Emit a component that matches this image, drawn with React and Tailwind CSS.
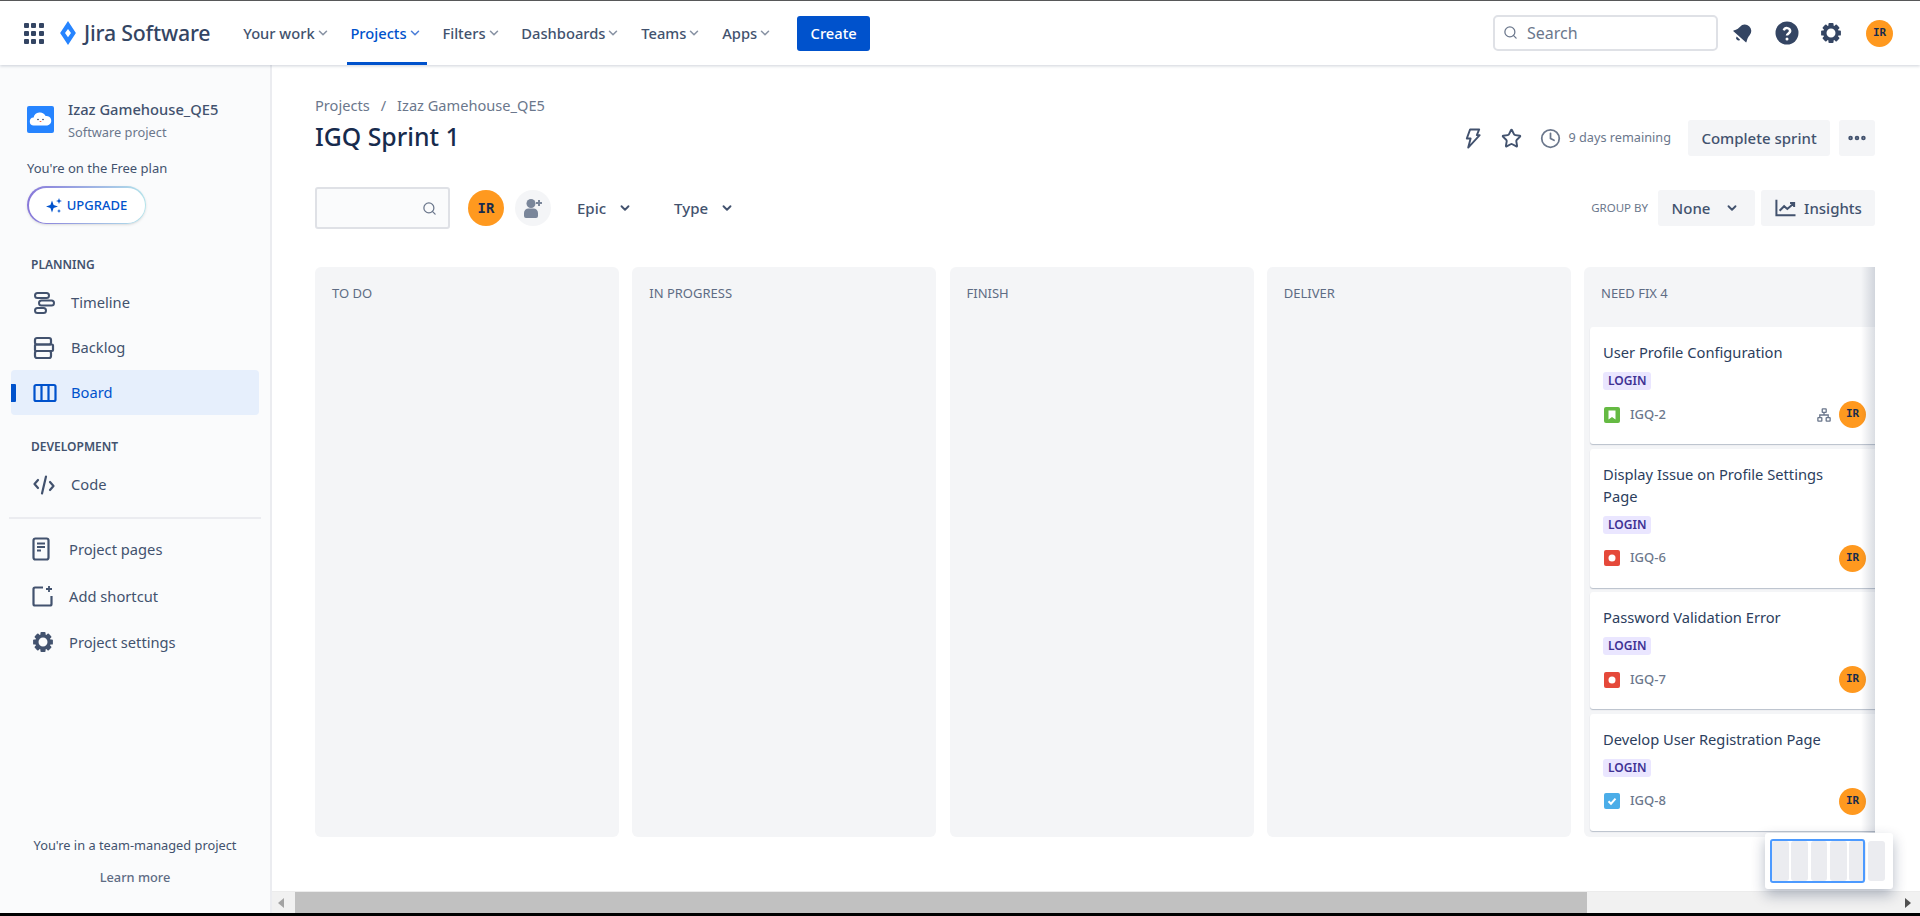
import React from 'react'
import { ChevronDown, Search, Star, Clock, Ellipsis } from 'lucide-react'

const Avatar = ({ size = 'w-[27px] h-[27px] text-[11px]' }) => (
  <div className={`${size} rounded-full bg-[#ff991f] text-[#172b4d] flex items-center justify-center font-bold font-['DejaVu_Sans_Mono',monospace] shrink-0`}>
    IR
  </div>
)

const Gear = ({ className }) => (
  <svg viewBox="0 0 24 24" className={className} fill="none">
    {[0, 45, 90, 135, 180, 225, 270, 315].map(a => (
      <rect key={a} x="9.2" y="1.2" width="5.6" height="5" rx="1" fill="currentColor" transform={`rotate(${a} 12 12)`} />
    ))}
    <circle cx="12" cy="12" r="6.7" stroke="currentColor" strokeWidth="3.6" />
  </svg>
)

const JiraLogo = () => (
  <svg viewBox="0 0 24 32" className="w-[18px] h-[24px]">
    <path fillRule="evenodd" d="M12 0 L22.5 16 L12 32 L1.5 16 Z M12 10.5 L8 16 L12 21.5 L16 16 Z" fill="#2684ff" />
  </svg>
)

const GridDots = () => (
  <div className="grid grid-cols-3 gap-[3px] w-[19px]">
    {[1, 2, 3, 4, 5, 6, 7, 8, 9].map(n => <span key={n} className="w-[5px] h-[5px] bg-[#344563] rounded-[1px]" />)}
  </div>
)

const NavItem = ({ label, active }) => (
  <div className={`relative h-[63px] flex items-center px-[5px] gap-[1px] text-[14.7px] font-medium ${active ? 'text-[#0052cc]' : 'text-[#42526e]'}`}>
    {label}
    <ChevronDown className={`w-[14px] h-[14px] ${active ? 'text-[#4c7fd8]' : 'text-[#8993a4]'}`} strokeWidth={2.6} />
    {active && <span className="absolute left-[2px] right-0 bottom-0 h-[3px] bg-[#0052cc]" />}
  </div>
)

const TimelineIcon = () => (
  <svg viewBox="0 0 22 24" className="w-[22px] h-[24px]" fill="none" stroke="#42526e" strokeWidth="2">
    <rect x="2" y="2" width="14" height="5" rx="2.5" />
    <rect x="6" y="9.5" width="15" height="5" rx="2.5" />
    <rect x="2" y="17" width="11" height="5" rx="2.5" />
  </svg>
)

const BacklogIcon = () => (
  <svg viewBox="0 0 22 24" className="w-[22px] h-[24px]" fill="none" stroke="#42526e" strokeWidth="2.2">
    <rect x="2" y="2" width="16" height="6.500" rx="2" />
    <rect x="2" y="8.500" width="18" height="6.500" rx="1" />
    <rect x="2" y="15" width="16" height="7" rx="2" />
  </svg>
)

const BoardIcon = () => (
  <svg viewBox="0 0 24 20" className="w-[24px] h-[20px]" fill="none" stroke="#0052cc" strokeWidth="2.2">
    <rect x="1.5" y="2" width="21" height="16" rx="1.5" />
    <path d="M8.5 2v16M15.5 2v16" />
  </svg>
)

const CodeIcon = () => (
  <svg viewBox="0 0 22 20" className="w-[22px] h-[20px]" fill="none" stroke="#42526e" strokeWidth="2.2" strokeLinecap="round" strokeLinejoin="round">
    <path d="M5 5 1.5 9 5 13M17 7l3.5 4-3.5 4M13 1.5 9 18.5" />
  </svg>
)

const PagesIcon = () => (
  <svg viewBox="0 0 18 24" className="w-[18px] h-[24px]" fill="none" stroke="#42526e" strokeWidth="2.2">
    <rect x="1.5" y="1.5" width="15" height="21" rx="2" />
    <path d="M5 6.5h8M5 10h8M5 13.5h4" />
  </svg>
)

const ShortcutIcon = () => (
  <svg viewBox="0 0 22 22" className="w-[22px] h-[22px]" fill="none" stroke="#42526e" strokeWidth="2.2">
    <path d="M11 2.5H3a1.5 1.5 0 0 0-1.5 1.500v15A1.5 1.5 0 0 0 3 20.5h15a1.5 1.5 0 0 0 1.5-1.5v-8" />
    <path d="M17 1v6M14 4h6" strokeWidth="1.8" />
  </svg>
)

const SideRow = ({ icon, label, active, tall }) => (
  <div className={`relative flex items-center ${tall ? 'h-[46.500px] pl-[26px]' : 'h-[45px] pl-[22px]'} ${active ? 'bg-[#e6effc] rounded-[4px] text-[#0052cc]' : 'text-[#42526e]'} text-[14.7px]`}>
    {active && <span className="absolute left-0 top-[14px] w-[5px] h-[18px] bg-[#0052cc] rounded-r-[1px]" />}
    <span className={`${tall ? 'w-[37px]' : 'w-[38px]'} flex items-center shrink-0`}>{icon}</span>
    {label}
  </div>
)

const Sidebar = () => (
  <aside className="w-[272px] shrink-0 bg-[#fafbfc] border-r-2 border-[#ebecf0] flex flex-col pt-[34px]">
    <div className="flex items-start gap-[14px] pl-[27px]">
      <svg viewBox="0 0 27 27" className="w-[27px] h-[27px] mt-[7px] rounded-[2px]">
        <rect width="27" height="27" fill="#2684ff" />
        <path d="M7 19.5a4 4 0 0 1-.4-8 6.4 6.4 0 0 1 12-1.5 4.8 4.8 0 0 1 1.7 9.5Z" fill="#fff" />
        <circle cx="11" cy="13.5" r=".8" fill="#253858" />
        <circle cx="16" cy="13.5" r=".8" fill="#253858" />
        <path d="M12.5 15h2a1 1 0 0 1-2 0Z" fill="#ff5630" />
      </svg>
      <div>
        <div className="text-[14.7px] leading-[20px] font-medium text-[#42526e]">Izaz Gamehouse_QE5</div>
        <div className="text-[12.800px] leading-[20px] mt-[3px] text-[#6b778c]">Software project</div>
      </div>
    </div>

    <div className="pl-[27px] mt-[16px] text-[13px] leading-[20px] text-[#42526e]">You're on the Free plan</div>
    <div className="ml-[27px] mt-[8px] w-[119px] h-[38px] rounded-full p-[1.5px] bg-linear-to-r from-[#8777d9] to-[#b3e3ea] shadow-sm">
      <div className="w-full h-full pt-[1px] rounded-full bg-white flex items-center justify-center gap-[5px] text-[13px] font-medium text-[#0052cc]">
        <svg viewBox="0 0 16 16" className="w-[16px] h-[16px]" fill="#0052cc">
          <path d="M6 2.5 7.6 7 12 8.5 7.6 10 6 14.5 4.4 10 0 8.5 4.4 7Z" />
          <path d="M13 0l.8 2.2L16 3l-2.2.8L13 6l-.8-2.200L10 3l2.200-.8ZM13 11l.6 1.400L15 13l-1.400.6L13 15l-.6-1.400L11 13l1.400-.6Z" />
        </svg>
        UPGRADE
      </div>
    </div>

    <div className="pl-[31px] mt-[33px] text-[12px] leading-[16px] font-semibold text-[#42526e]">PLANNING</div>
    <div className="mt-[7px] px-[11px]">
      <SideRow icon={<TimelineIcon />} label="Timeline" />
      <SideRow icon={<BacklogIcon />} label="Backlog" />
      <SideRow icon={<BoardIcon />} label="Board" active />
    </div>

    <div className="pl-[31px] mt-[24px] text-[12px] leading-[16px] font-semibold text-[#42526e]">DEVELOPMENT</div>
    <div className="mt-[7px] px-[11px]">
      <SideRow icon={<CodeIcon />} label="Code" />
    </div>

    <div className="mx-[9px] mt-[10px] h-[2px] bg-[#ebecf0]" />
    <div className="mt-[7px] px-[6px]">
      <SideRow tall icon={<PagesIcon />} label="Project pages" />
      <SideRow tall icon={<ShortcutIcon />} label="Add shortcut" />
      <SideRow tall icon={<Gear className="w-[22px] h-[22px] text-[#42526e]" />} label="Project settings" />
    </div>

    <div className="mt-auto pb-[26px] text-center text-[12.800px] leading-[20px] text-[#42526e]">
      <div>You're in a team-managed project</div>
      <div className="mt-[12px] font-medium text-[#5e6c84]">Learn more</div>
    </div>
  </aside>
)

const TopNav = () => (
  <header className="h-[64px] shrink-0 bg-white flex items-center pl-[24px] pr-[27px] shadow-[0_1px_3px_rgba(9,30,66,0.2)] relative z-10">
    <GridDots />
    <div className="ml-[16px]"><JiraLogo /></div>
    <div className="ml-[7px] text-[21.300px] font-medium text-[#344563] tracking-[-0.2px]">Jira Software</div>
    <nav className="ml-[28px] flex items-center gap-[10.800px]">
      <NavItem label="Your work" />
      <NavItem label="Projects" active />
      <NavItem label="Filters" />
      <NavItem label="Dashboards" />
      <NavItem label="Teams" />
      <NavItem label="Apps" />
    </nav>
    <button className="ml-[20px] w-[73px] h-[35px] rounded-[3px] bg-[#0052cc] text-white text-[14.7px] font-medium">Create</button>
    <div className="ml-auto w-[225px] h-[36px] border-2 border-[#dfe1e6] rounded-[5px] flex items-center pl-[8px] pb-[1px] gap-[9px] text-[16px] text-[#6b778c]">
      <Search className="w-[15px] h-[15px]" strokeWidth={2} />
      Search
    </div>
    <svg viewBox="0 0 24 24" className="ml-[14px] w-[22px] h-[22px]" fill="#344563">
      <g transform="rotate(42 12 12)">
        <path d="M12 2a7 7 0 0 0-7 7c0 5-2.500 6.500-2.500 8.500h19c0-2-2.500-3.500-2.500-8.500a7 7 0 0 0-7-7Z" />
        <path d="M9.500 19.500h5a2.500 2.500 0 0 1-5 0Z" />
      </g>
    </svg>
    <svg viewBox="0 0 24 24" className="ml-[21px] w-[24px] h-[24px]">
      <circle cx="12" cy="12" r="11.500" fill="#344563" />
      <path d="M8.800 9.300a3.300 3.300 0 0 1 6.400.8c0 2.200-3.200 2.500-3.200 4.400" fill="none" stroke="#fff" strokeWidth="2.500" />
      <circle cx="12" cy="18" r="1.500" fill="#fff" />
    </svg>
    <Gear className="ml-[21px] w-[22px] h-[22px] text-[#344563]" />
    <div className="ml-[24px]"><Avatar /></div>
  </header>
)

const cards = [
  { title: 'User Profile Configuration', id: 'IGQ-2', type: 'story', child: true },
  { title: 'Display Issue on Profile Settings Page', id: 'IGQ-6', type: 'bug' },
  { title: 'Password Validation Error', id: 'IGQ-7', type: 'bug' },
  { title: 'Develop User Registration Page', id: 'IGQ-8', type: 'task' },
]

const IssueIcon = ({ type }) => {
  if (type === 'story') {
    return (
      <svg viewBox="0 0 16 16" className="w-[16px] h-[16px]">
        <rect width="16" height="16" rx="2" fill="#65ba43" />
        <path d="M4.500 3.500h7v9L8 10l-3.500 2.500Z" fill="#fff" />
      </svg>
    )
  }
  if (type === 'bug') {
    return (
      <svg viewBox="0 0 16 16" className="w-[16px] h-[16px]">
        <rect width="16" height="16" rx="2" fill="#e5493a" />
        <circle cx="8" cy="8" r="3.500" fill="#fff" />
      </svg>
    )
  }
  return (
    <svg viewBox="0 0 16 16" className="w-[16px] h-[16px]">
      <rect width="16" height="16" rx="2" fill="#4bade8" />
      <path d="M4.500 8.200 7 10.700l4.500-5" fill="none" stroke="#fff" strokeWidth="2" />
    </svg>
  )
}

const Card = ({ title, id, type, child }) => (
  <div className="bg-white rounded-[3px] shadow-[0_1px_1px_rgba(9,30,66,0.25)] pt-[14px] pb-[16px] pl-[13px] pr-[16px]">
    <div className="text-[14.7px] leading-[22px] text-[#2c3e5d] pr-[20px]">{title}</div>
    <div className="mt-[9px] inline-flex align-top h-[18px] items-center px-[5px] rounded-[3px] bg-[#eae6ff] text-[#403294] text-[12px] font-semibold">LOGIN</div>
    <div className="mt-[11px] flex items-center h-[27px]">
      <div className="ml-[1px]"><IssueIcon type={type} /></div>
      <span className="ml-[10px] text-[13px] font-medium text-[#6b778c]">{id}</span>
      <div className="ml-auto flex items-center gap-[8px]">
        {child && (
          <svg viewBox="0 0 16 16" className="w-[14px] h-[14px]" fill="none" stroke="#6b778c" strokeWidth="1.500">
            <rect x="6" y="1" width="4.500" height="4" rx=".5" />
            <rect x="1" y="11" width="4.500" height="4" rx=".5" />
            <rect x="10.500" y="11" width="4.500" height="4" rx=".5" />
            <path d="M8 5v3M3.200 11V8h9.600v3" />
          </svg>
        )}
        <Avatar />
      </div>
    </div>
  </div>
)

const Column = ({ title, children }) => (
  <div className="w-[304px] h-full shrink-0 bg-[#f4f5f7] rounded-[6px]">
    <div className="h-[60px] pl-[17px] flex items-center pb-[6px] text-[13px] text-[#5e6c84]">{title}</div>
    {children && <div className="px-[6px] flex flex-col gap-[4.500px]">{children}</div>}
  </div>
)

const GhostButton = ({ className, children }) => (
  <button className={`h-[36px] rounded-[3px] bg-[#f4f5f7] flex items-center justify-center text-[#42526e] text-[15px] font-medium ${className}`}>{children}</button>
)

const Minimap = () => (
  <div className="absolute right-[27px] bottom-[24px] w-[128px] h-[56px] bg-white rounded-[3px] shadow-[0_6px_14px_rgba(9,30,66,0.3)] flex items-center pl-[7px] pr-[8px] gap-[2.500px] z-20">
    {[0, 1, 2, 3, 4, 5].map(n => <span key={n} className="flex-1 h-[40px] bg-[#ebecf0] rounded-[3px]" />)}
    <span className="absolute left-[5px] top-[6px] w-[95px] h-[44px] border-2 border-[#4c9aff] rounded-[3px]" />
  </div>
)

const Scrollbar = () => (
  <div className="h-[22px] shrink-0 bg-[#f1f1f1] flex items-center pl-[6px] pr-[9px] border-t border-[#ececec]">
    <span className="w-0 h-0 border-y-[5px] border-y-transparent border-r-[6px] border-r-[#a3a3a3]" />
    <span className="ml-[11px] w-[1292px] h-full bg-[#c1c1c1]" />
    <span className="ml-auto w-0 h-0 border-y-[5px] border-y-transparent border-l-[6px] border-l-[#505050]" />
  </div>
)

export default function App() {
  return (
    <div className="w-[1920px] h-[916px] overflow-hidden flex flex-col bg-white font-['Noto_Sans',sans-serif]">
      <div className="h-[1px] shrink-0 bg-[#5a5a5a]" />
      <TopNav />
      <div className="flex-1 flex min-h-0">
        <Sidebar />
        <main className="relative flex-1 min-w-0 flex flex-col">
          <div className="flex-1 min-h-0 pl-[43px] pr-[45px] pt-[31px]">
            <div className="h-[20px] flex items-center text-[14.600px] text-[#6b778c]">
              Projects<span className="mx-[11px]">/</span>Izaz Gamehouse_QE5
            </div>
            <div className="mt-[4px] h-[36px] flex items-center">
              <h1 className="text-[24.800px] -mt-[3px] font-medium text-[#172b4d]">IGQ Sprint 1</h1>
              <div className="ml-auto flex items-center">
                <svg viewBox="0 0 16 22" className="w-[16px] h-[21px]" fill="none" stroke="#42526e" strokeWidth="2" strokeLinejoin="round">
                  <path d="M5 1.500h9.500L12 7.500h3L3 20.500l2.500-9.500H1.500Z" />
                </svg>
                <Star className="ml-[20px] w-[21px] h-[21px] text-[#42526e]" strokeWidth={2.2} />
                <Clock className="ml-[18px] w-[21px] h-[21px] text-[#6b778c]" strokeWidth={2} />
                <span className="ml-[8px] text-[12.700px] text-[#6b778c]">9 days remaining</span>
                <GhostButton className="ml-[17px] w-[142px]">Complete sprint</GhostButton>
                <GhostButton className="ml-[9px] w-[36px]"><Ellipsis className="w-[22px] h-[22px]" strokeWidth={3} /></GhostButton>
              </div>
            </div>

            <div className="mt-[31px] h-[42px] flex items-center">
              <div className="w-[135px] h-[42px] border-2 border-[#dfe1e6] rounded-[3px] bg-[#fafbfc] flex items-center justify-end pr-[11px]">
                <Search className="w-[15px] h-[15px] text-[#6b778c]" strokeWidth={2} />
              </div>
              <div className="ml-[18px]"><Avatar size="w-[36px] h-[36px] text-[14px]" /></div>
              <div className="ml-[11px] w-[36px] h-[36px] rounded-full bg-[#f4f5f7] flex items-center justify-center">
                <svg viewBox="0 0 24 24" className="w-[24px] h-[24px]" fill="#7a869a">
                  <circle cx="10" cy="7.500" r="4.500" />
                  <path d="M3 17a4.500 4.500 0 0 1 4.500-4.500h5A4.500 4.500 0 0 1 17 17v3a2 2 0 0 1-2 2H5a2 2 0 0 1-2-2Z" />
                  <path d="M18 4v6M15 7h6" stroke="#7a869a" strokeWidth="2" />
                </svg>
              </div>
              <span className="ml-[26px] text-[15px] font-medium text-[#42526e]">Epic</span>
              <ChevronDown className="ml-[12px] w-[14px] h-[14px] text-[#42526e]" strokeWidth={3.2} />
              <span className="ml-[42px] text-[15px] font-medium text-[#42526e]">Type</span>
              <ChevronDown className="ml-[12px] w-[14px] h-[14px] text-[#42526e]" strokeWidth={3.2} />

              <span className="ml-auto text-[11.500px] text-[#6b778c]">GROUP BY</span>
              <GhostButton className="ml-[10px] w-[97px] gap-[15px] pr-[2px]">None<ChevronDown className="w-[14px] h-[14px]" strokeWidth={3.2} /></GhostButton>
              <GhostButton className="ml-[6px] w-[114px] gap-[7px]">
                <svg viewBox="0 0 24 22" className="w-[23px] h-[20px]" fill="none" stroke="#42526e" strokeWidth="2.200">
                  <path d="M2 2v17h21" />
                  <path d="M5.500 14l5-5 3.500 3 7-6M17 5.500h4.500V10" />
                </svg>
                Insights
              </GhostButton>
            </div>

            <div className="relative mt-[38px] h-[570px] overflow-hidden">
              <div className="flex gap-[13.250px] h-full">
                <Column title="TO DO" />
                <Column title="IN PROGRESS" />
                <Column title="FINISH" />
                <Column title="DELIVER" />
                <Column title="NEED FIX 4">
                  {cards.map(c => <Card key={c.id} {...c} />)}
                </Column>
              </div>
              <div className="absolute right-0 top-0 bottom-0 w-[14px] bg-linear-to-r from-transparent to-[#091e4226]" />
            </div>
          </div>
          <Minimap />
          <Scrollbar />
        </main>
      </div>
      <div className="h-[3px] shrink-0 bg-black" />
    </div>
  )
}
